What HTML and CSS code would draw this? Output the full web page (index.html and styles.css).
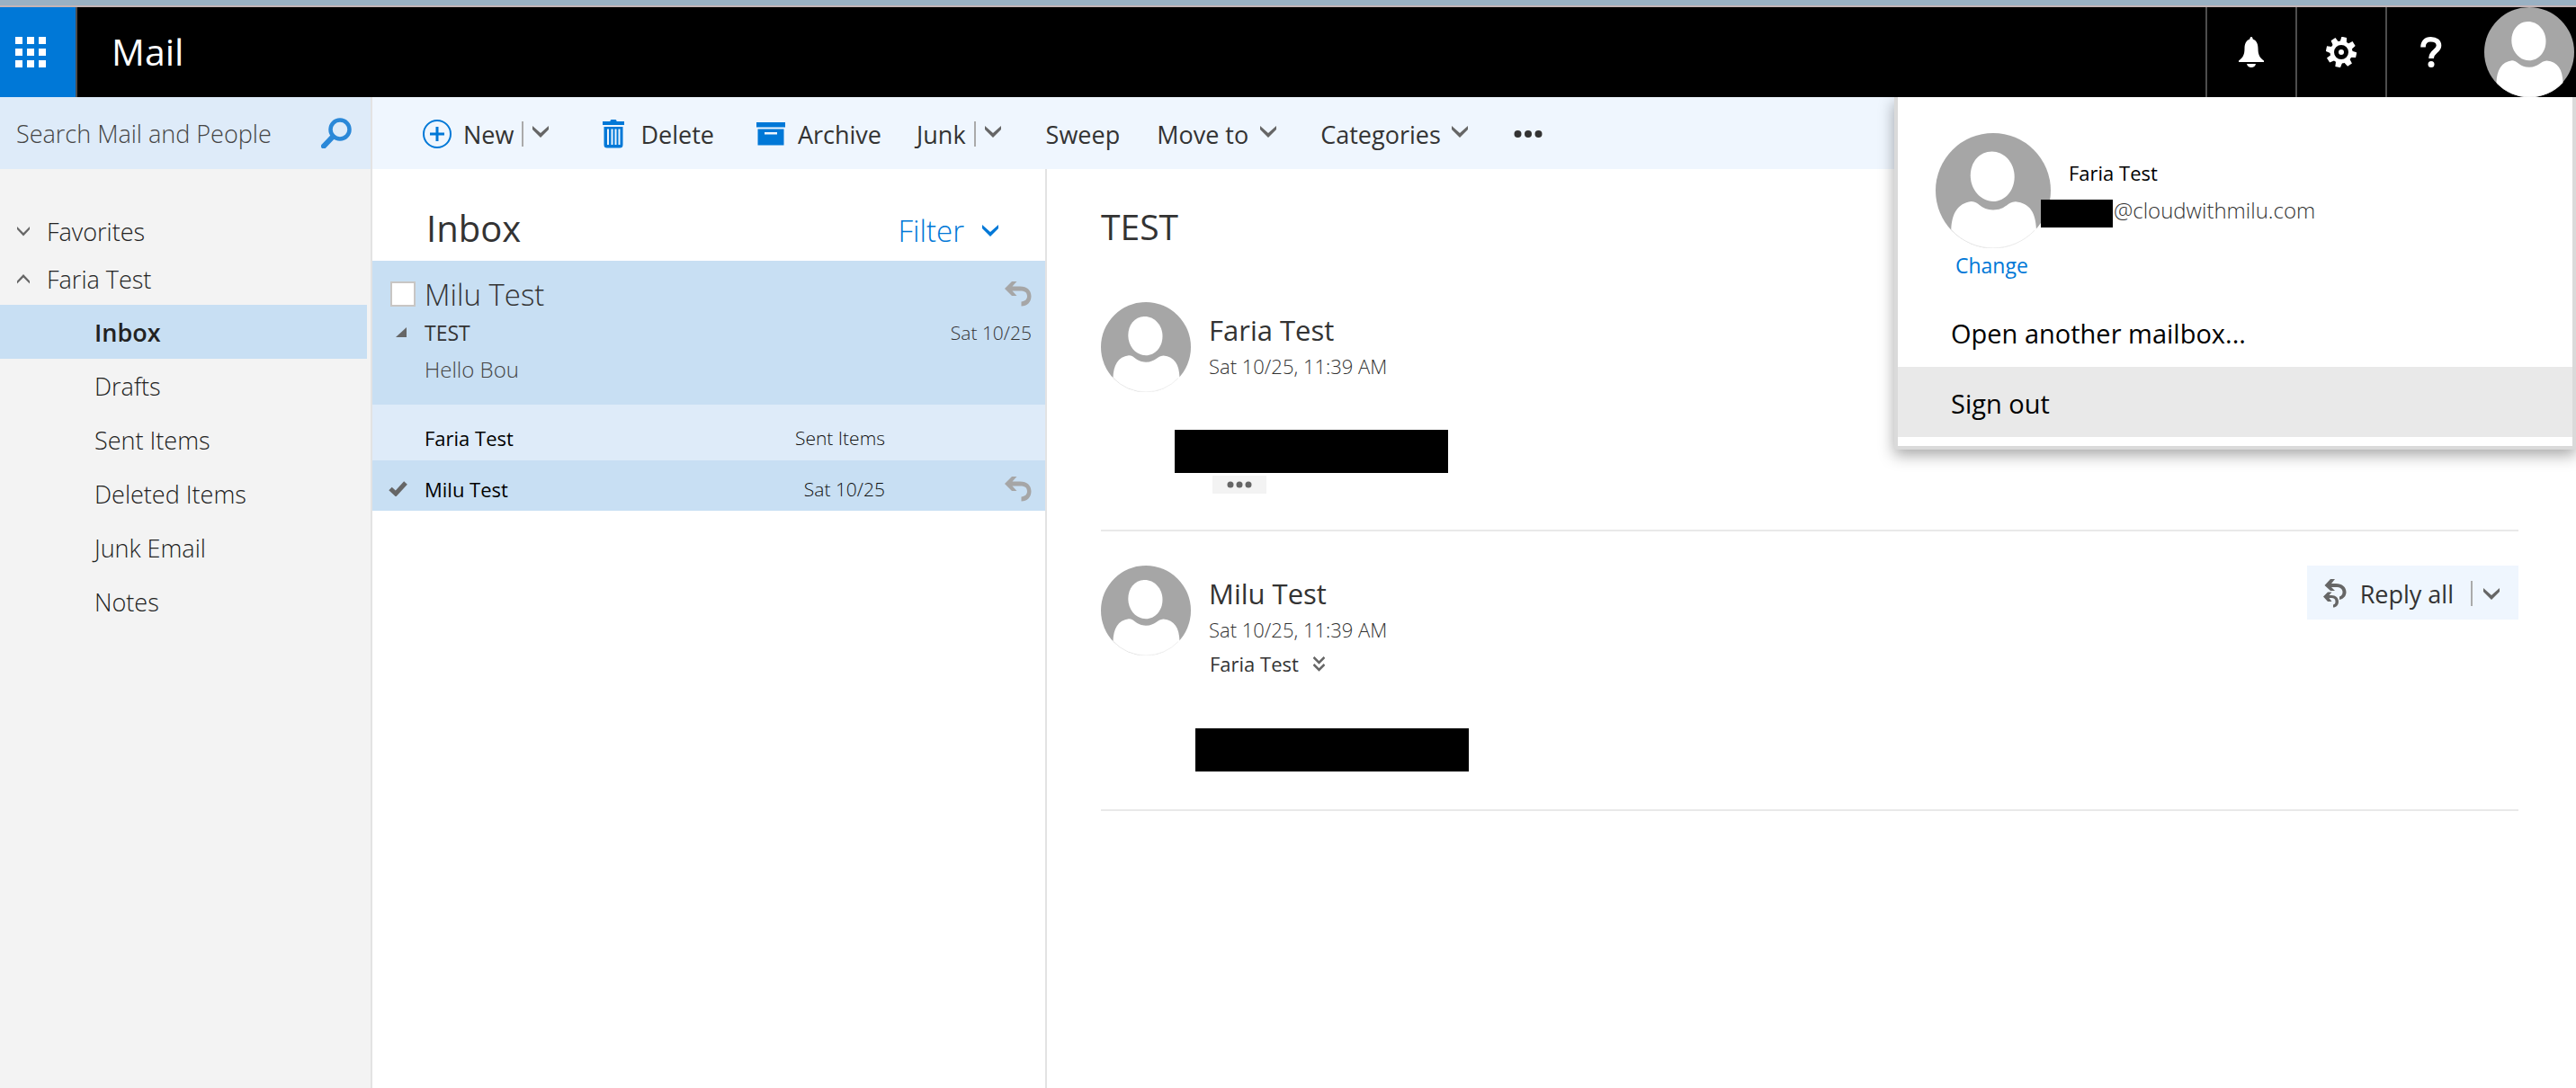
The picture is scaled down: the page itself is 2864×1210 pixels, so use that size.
FILE: index.html
```html
<!DOCTYPE html>
<html lang="en">
<head>
<meta charset="utf-8">
<title>Mail</title>
<link rel="stylesheet" href="styles.css">
</head>
<body>
<svg class="defs" aria-hidden="true">
  <symbol id="person" viewBox="0 0 100 100">
    <circle cx="50" cy="50" r="50" fill="#a6a6a6"/>
    <path fill="#fff" d="M49 16C59 16 68.500 25 68.500 38C68.500 50 60 59.300 50 59.300C39 59.300 30.300 49 30.300 37C30.300 25 38 16 49 16Z"/>
    <path fill="#fff" d="M13.500 84C14 70 19 61 31 59.300C38 59.500 39 66.700 50 66.700C61 66.700 62 59.800 69.500 59.500C82 61 87 69 87.500 84A50 50 0 0 1 13.500 84Z"/>
    <path fill="none" stroke="#e4e4e4" stroke-width=".6" d="M14 84.500A49.700 49.700 0 0 0 86 84.500"/>
  </symbol>
  <symbol id="chevron" viewBox="0 0 18 13"><path d="M0 0V4L9 13L18 4V0L9 8Z"/></symbol>
  <symbol id="reply" viewBox="0 0 30 28"><path d="M8 0H13.500L8.500 5.500H17C25 5.500 29.500 10 29.500 16.500C29.500 23 25 27.500 18.500 27.500V22.500C22.500 22 25 20 25 16.500C25 12 22 10.500 17 10.500H8.500L13.500 16H8L0 8Z"/></symbol>
</svg>

<header class="topbar">
  <button class="launcher" type="button" aria-label="App launcher">
    <svg viewBox="0 0 34 34" fill="#fff"><path d="M0 0h8v8H0zM13 0h8v8h-8zM26 0h8v8h-8zM0 13h8v8H0zM13 13h8v8h-8zM26 13h8v8h-8zM0 26h8v8H0zM13 26h8v8h-8zM26 26h8v8h-8z"/></svg>
  </button>
  <span class="app-name">Mail</span>
  <nav class="top-actions" aria-label="Account">
    <button type="button" aria-label="Notifications"><svg viewBox="0 0 34 34" fill="#fff"><path d="M17 0C18.500 0 18.500 1.500 18.700 2.500C23 4 24.500 8 24.500 13C24.500 20 26.500 23.500 31 26.500V28H3V26.500C7.500 23.500 9.500 20 9.500 13C9.500 8 11 4 15.300 2.500C15.500 1.500 15.500 0 17 0ZM12 30H22C21.500 32.500 19.500 34 17 34S12.500 32.500 12 30Z"/></svg></button>
    <button type="button" aria-label="Settings"><svg viewBox="-17 -17 34 34"><g fill="#fff"><circle r="12.500"/><path id="tooth" d="M-3.200 -17H2.600L3.800 -10H-3.800ZM-3.200 17H2.600L3.800 10H-3.800Z" transform="rotate(12)"/><use href="#tooth" transform="rotate(45)"/><use href="#tooth" transform="rotate(90)"/><use href="#tooth" transform="rotate(135)"/></g><circle r="5.500" fill="none" stroke="#000" stroke-width="5"/></svg></button>
    <button type="button" aria-label="Help"><svg viewBox="0 0 34 34" fill="none"><path d="M8 11.500C8 6 11 2.800 16.500 2.800C22.500 2.800 25.500 5.500 25.500 9.800C25.500 16 17 16 17 24" stroke="#fff" stroke-width="5.600"/><circle cx="17" cy="30.500" r="3.500" fill="#fff"/></svg></button>
    <button class="me" type="button" aria-label="My account"><svg class="avatar"><use href="#person"/></svg></button>
  </nav>
  <section class="account" aria-label="My account">
    <div class="profile">
      <svg class="avatar large"><use href="#person"/></svg>
      <div class="identity">
        <div class="profile-name">Faria Test</div>
        <div class="email"><span class="redacted"></span><span>@cloudwithmilu.com</span></div>
      </div>
    </div>
    <a class="change" href="#">Change</a>
    <ul class="menu">
      <li><button type="button">Open another mailbox...</button></li>
      <li><button class="hover" type="button">Sign out</button></li>
    </ul>
  </section>
</header>

<div class="workspace">
  <aside class="sidebar">
    <form class="search">
      <input type="text" placeholder="Search Mail and People" aria-label="Search Mail and People">
      <button type="submit" aria-label="Search"><svg viewBox="0 0 34 34" fill="none" stroke="#2b88d8"><circle cx="21" cy="13" r="10.500" stroke-width="4.500"/><path d="M13 21L3 31.500" stroke-width="6" stroke-linecap="round"/></svg></button>
    </form>
    <nav class="folders" aria-label="Folders">
      <button class="group" type="button"><svg class="twist" viewBox="0 0 14 11"><path d="M0 0V3L7 10.500L14 3V0L7 7Z"/></svg>Favorites</button>
      <button class="group" type="button"><svg class="twist" viewBox="0 0 14 11"><path d="M0 10.500V7.500L7 0L14 7.500V10.500L7 3.500Z"/></svg>Faria Test</button>
      <ul>
        <li><a class="current" href="#">Inbox</a></li>
        <li><a href="#">Drafts</a></li>
        <li><a href="#">Sent Items</a></li>
        <li><a href="#">Deleted Items</a></li>
        <li><a href="#">Junk Email</a></li>
        <li><a href="#">Notes</a></li>
      </ul>
    </nav>
  </aside>

  <div class="content">
    <div class="toolbar" role="toolbar">
      <button class="new" type="button"><svg class="ico-new" viewBox="0 0 32 32" fill="none" stroke="#0078d7"><circle cx="16" cy="16" r="15" stroke-width="2"/><path d="M16 8V24M8 16H24" stroke-width="3"/></svg>New</button>
      <button class="split" type="button" aria-label="New options"><svg class="chev"><use href="#chevron"/></svg></button>
      <button class="delete" type="button"><svg class="ico-trash" viewBox="0 0 24 32"><path fill="#0078d7" fill-rule="evenodd" d="M8.500 2V1L9.500 0H14.500L15.500 1V2H24V6H0V2ZM1.500 8H22.500V28C22.500 30.500 21.500 31.500 19 31.500H5C2.500 31.500 1.500 30.500 1.500 28ZM5 10.500V28H7V10.500ZM9.500 10.500V28H11.500V10.500ZM13.500 10.500V28H15.500V10.500ZM17.500 10.500V28H19.500V10.500Z"/></svg>Delete</button>
      <button class="archive" type="button"><svg class="ico-archive" viewBox="0 0 32 26"><path fill="#0078d7" fill-rule="evenodd" d="M0 0H32V5.500H0ZM1.500 7.500H30.500V25.500H1.500ZM9 11V13.500H23V11Z"/></svg>Archive</button>
      <button class="junk" type="button">Junk</button>
      <button class="split" type="button" aria-label="Junk options"><svg class="chev"><use href="#chevron"/></svg></button>
      <button class="sweep" type="button">Sweep</button>
      <button class="move" type="button">Move to<svg class="chev"><use href="#chevron"/></svg></button>
      <button class="categories" type="button">Categories<svg class="chev"><use href="#chevron"/></svg></button>
      <button class="more" type="button" aria-label="More commands"><svg viewBox="0 0 32 10"><circle cx="4.500" cy="5" r="4"/><circle cx="16" cy="5" r="4"/><circle cx="27.500" cy="5" r="4"/></svg></button>
    </div>

    <div class="panes">
      <section class="list" aria-label="Messages">
        <div class="list-head">
          <h1>Inbox</h1>
          <button class="filter" type="button">Filter<svg class="chev"><use href="#chevron"/></svg></button>
        </div>
        <article class="conversation">
          <input class="pick" type="checkbox" aria-label="Select conversation">
          <span class="from">Milu Test</span>
          <svg class="reply"><use href="#reply"/></svg>
          <svg class="expand" viewBox="0 0 12 11"><path d="M12 0V11H0Z"/></svg>
          <span class="subject">TEST</span>
          <time class="date">Sat 10/25</time>
          <span class="preview">Hello Bou</span>
        </article>
        <ul class="thread">
          <li><span class="mark"></span><span class="name">Faria Test</span><span class="meta">Sent Items</span><span class="state"></span></li>
          <li class="picked"><span class="mark"><svg viewBox="0 0 21 17"><path d="M2 8.500L8 14L19 2" fill="none" stroke="#666" stroke-width="5"/></svg></span><span class="name">Milu Test</span><time class="meta">Sat 10/25</time><span class="state"><svg class="reply"><use href="#reply"/></svg></span></li>
        </ul>
      </section>

      <main class="reading">
        <h2>TEST</h2>
        <article class="message">
          <div class="msg-head">
            <svg class="avatar"><use href="#person"/></svg>
            <div class="who">
              <div class="sender">Faria Test</div>
              <time class="when">Sat 10/25, 11:39 AM</time>
            </div>
          </div>
          <div class="body reply-body">
            <div class="redacted"></div>
            <button class="quoted" type="button" aria-label="Show message history"><svg viewBox="0 0 28 8"><circle cx="4" cy="4" r="3.500"/><circle cx="14" cy="4" r="3.500"/><circle cx="24" cy="4" r="3.500"/></svg></button>
          </div>
        </article>
        <article class="message">
          <div class="msg-head">
            <svg class="avatar"><use href="#person"/></svg>
            <div class="who">
              <div class="sender">Milu Test</div>
              <time class="when">Sat 10/25, 11:39 AM</time>
              <div class="to">Faria Test<svg viewBox="0 0 13 17" fill="none" stroke="#666" stroke-width="2.500"><path d="M0.500 1L6.500 7L12.500 1M0.500 9L6.500 15L12.500 9"/></svg></div>
            </div>
            <div class="reply-all">
              <button type="button"><svg viewBox="0 0 26 32" fill="#666"><path d="M8 0H13L9 5H14C21 5 25.500 9 25.500 14.500C25.500 19 22.500 22 18 23V19.500C20.500 18.500 21.500 17 21.500 14.500C21.500 11 19 9 14 9H9L13 13H8L1.500 7Z"/><path d="M5 14.500H9.500L6.500 18H9C14 18 17 21 17 25C17 29 14.500 31.500 11 31.500V28.500C13 28 13.500 27 13.500 25C13.500 22.500 12 21 9 21H6.500L9.500 25H5L0 19.500Z"/></svg>Reply all</button>
              <button class="split" type="button" aria-label="More reply options"><svg class="chev"><use href="#chevron"/></svg></button>
            </div>
          </div>
          <div class="body original-body">
            <div class="redacted"></div>
          </div>
        </article>
      </main>
    </div>
  </div>
</div>
</body>
</html>
```
FILE: styles.css
```css
*, *::before, *::after { box-sizing: border-box; }
html, body { height: 100%; }
body {
  margin: 0;
  display: flex;
  flex-direction: column;
  background: #fff;
  color: #333;
  font-family: "Open Sans", "Noto Sans", sans-serif;
  font-size: 27px;
}
button { font: inherit; color: inherit; background: none; border: 0; padding: 0; cursor: pointer; }
a { color: inherit; text-decoration: none; }
ul { list-style: none; margin: 0; padding: 0; }
svg { display: block; flex: none; }
.defs { position: absolute; width: 0; height: 0; }
.chev { width: 18px; height: 13px; fill: #666; }
.avatar { width: 100px; height: 100px; }
.avatar.large { width: 128px; height: 128px; }
.redacted { display: block; background: #000; }

/* Top bar */
.topbar {
  position: relative;
  z-index: 1;
  display: flex;
  flex: none;
  height: 108px;
  border-top: 6px solid #9ab1c3;
  background: #000;
  color: #fff;
  box-shadow: inset 0 2px #c4b4b6;
  padding-top: 2px;
}
.launcher { width: 86px; background: #0078d7; border-right: 2px solid #4d4d4d; padding-left: 17px; }
.launcher svg { width: 34px; height: 34px; }
.app-name { padding-left: 38px; font-size: 41px; line-height: 98px; }
.top-actions { display: flex; margin-left: auto; }
.top-actions button { width: 100px; border-left: 2px solid #4d4d4d; display: flex; align-items: center; justify-content: center; }
.top-actions button svg { width: 34px; height: 34px; }
.top-actions .me { width: 102px; margin-left: 10px; padding-right: 2px; border: 0; }
.top-actions .me svg { width: 100px; height: 100px; }

/* Account panel */
.account {
  position: absolute;
  top: 102px;
  right: 0;
  width: 758px;
  padding: 40px 0 10px;
  background: #fff;
  border: 4px solid #dadada;
  border-top: 0;
  box-shadow: 0 6px 16px rgba(0, 0, 0, .35);
  clip-path: inset(0 0 -40px -40px);
  color: #000;
}
.profile { display: flex; padding-left: 42px; }
.identity { padding: 24px 0 0 20px; }
.profile-name { font-size: 22px; line-height: 40px; }
.email { display: flex; gap: 1px; align-items: center; margin-left: -31px; font-size: 24px; font-weight: 300; line-height: 44px; color: #333; }
.email .redacted { width: 80px; height: 31px; margin-top: 6px; }
.change { display: block; padding-left: 64px; font-size: 23px; line-height: 38px; color: #0078d7; }
.menu { margin-top: 16px; }
.menu button { display: block; width: 100%; height: 78px; padding: 2px 0 0 59px; text-align: left; font-size: 29px; }
.menu .hover { background: #e9e9e9; }

/* Layout */
.workspace { display: grid; grid-template-columns: 414px 1fr; flex: 1; }
.content { display: flex; flex-direction: column; min-width: 0; }
.panes { display: grid; grid-template-columns: 750px 1fr; flex: 1; }

/* Sidebar */
.sidebar { background: #f3f3f3; border-right: 2px solid #e3e3e3; font-weight: 300; color: #222; }
.search { display: flex; align-items: center; height: 80px; padding: 0 21px 0 18px; background: #deebf9; }
.search input { flex: 1; min-width: 0; border: 0; padding: 0; background: none; font: inherit; color: #333; outline: 0; }
.search input::placeholder { color: #444; opacity: 1; }
.search svg { width: 34px; height: 34px; }
.folders { padding-top: 43px; }
.group { display: flex; align-items: center; gap: 19px; width: 100%; height: 53px; padding-left: 19px; font-weight: 300; }
.twist { width: 14px; height: 11px; fill: #666; }
.folders ul { margin-top: 2px; }
.folders li a { display: block; height: 60px; margin-right: 4px; padding: 2px 0 0 105px; line-height: 58px; }
.folders .current { background: #c8dff3; font-weight: 600; }

/* Toolbar */
.toolbar { display: flex; align-items: center; height: 80px; padding: 2px 0 0 56px; background: #eff6fe; }
.toolbar button { display: flex; align-items: center; }
.toolbar .chev { margin-bottom: 6px; }
.toolbar .new { gap: 13px; }
.toolbar .split, .reply-all .split { height: 28px; border-left: 2px solid #aaa; padding-left: 10px; }
.toolbar .split { margin-left: 9px; }
.toolbar .delete { gap: 18px; margin-left: 60px; }
.toolbar .archive { gap: 14px; margin-left: 47px; }
.toolbar .junk { margin-left: 39px; }
.toolbar .sweep { margin-left: 50px; }
.toolbar .move { gap: 13px; margin-left: 41px; }
.toolbar .categories { gap: 12px; margin-left: 49px; }
.toolbar .more { margin-left: 51px; }
.toolbar .more svg { width: 32px; height: 10px; fill: #333; }
.ico-new { width: 32px; height: 32px; }
.ico-trash { width: 24px; height: 32px; }
.ico-archive { width: 32px; height: 26px; }

/* Message list */
.list { border-right: 2px solid #e3e3e3; }
.list-head { display: flex; align-items: baseline; justify-content: space-between; height: 102px; padding: 38px 52px 0 60px; }
.list-head h1 { margin: 0; font-size: 40px; font-weight: 400; line-height: 56px; }
.filter { display: flex; align-items: center; gap: 20px; font-size: 33px; font-weight: 300; color: #0078d7; }
.filter .chev { fill: #0078d7; }
.conversation {
  display: grid;
  grid-template-columns: 38px 1fr auto;
  grid-template-rows: 44px 41px 40px;
  align-items: center;
  height: 160px;
  padding: 15px 15px 0 20px;
  background: #c8dff3;
}
.pick { appearance: none; width: 28px; height: 28px; margin: 0; background: #fff; border: 2px solid #c8c6c4; }
.from { font-size: 33px; font-weight: 300; }
.reply { width: 30px; height: 28px; fill: #a6a6a6; justify-self: end; }
.expand { width: 12px; height: 11px; margin-left: 6px; fill: #666; }
.subject { font-size: 23px; }
.date { font-size: 21px; font-weight: 300; color: #333; }
.preview { grid-column: 2; font-size: 24px; font-weight: 300; color: #444; }
.thread li { display: grid; grid-template-columns: 40px 1fr auto 163px; align-items: center; height: 62px; padding: 12px 15px 0 18px; background: #deebf9; font-size: 22px; color: #000; }
.thread .picked { height: 56px; padding-top: 7px; background: #c8dff3; }
.mark svg { width: 21px; height: 17px; }
.meta { font-size: 21px; font-weight: 300; color: #111; }
.state { display: flex; justify-content: flex-end; }

/* Reading pane */
.reading { padding: 36px 64px 0 60px; }
.reading h2 { margin: 0 0 56px; font-size: 39px; font-weight: 400; line-height: 56px; }
.message { border-bottom: 2px solid #e9e9e9; margin-bottom: 38px; }
.msg-head { display: flex; align-items: flex-start; gap: 20px; }
.who { padding-top: 10px; }
.sender { font-size: 31px; line-height: 42px; }
.when { display: block; font-size: 22px; font-weight: 300; line-height: 38px; color: #333; }
.to { display: flex; align-items: center; gap: 16px; padding-left: 1px; font-size: 22px; line-height: 38px; }
.to svg { width: 13px; height: 17px; }
.body .redacted { width: 304px; height: 48px; }
.reply-body { padding: 42px 0 40px 82px; }
.original-body { padding: 53px 0 42px 105px; }
.quoted { display: flex; align-items: center; justify-content: center; width: 60px; height: 20px; margin: 3px 0 0 42px; background: #f3f3f3; }
.quoted svg { width: 28px; height: 8px; fill: #666; }
.reply-all { display: flex; align-items: center; height: 60px; margin-left: auto; padding: 2px 21px 0 18px; background: #eff6fe; }
.reply-all button { display: flex; align-items: center; gap: 15px; }
.reply-all button svg { width: 26px; height: 32px; }
.reply-all .split { margin-left: 19px; padding-left: 12px; }
.reply-all .split .chev { width: 18px; height: 13px; }
```
